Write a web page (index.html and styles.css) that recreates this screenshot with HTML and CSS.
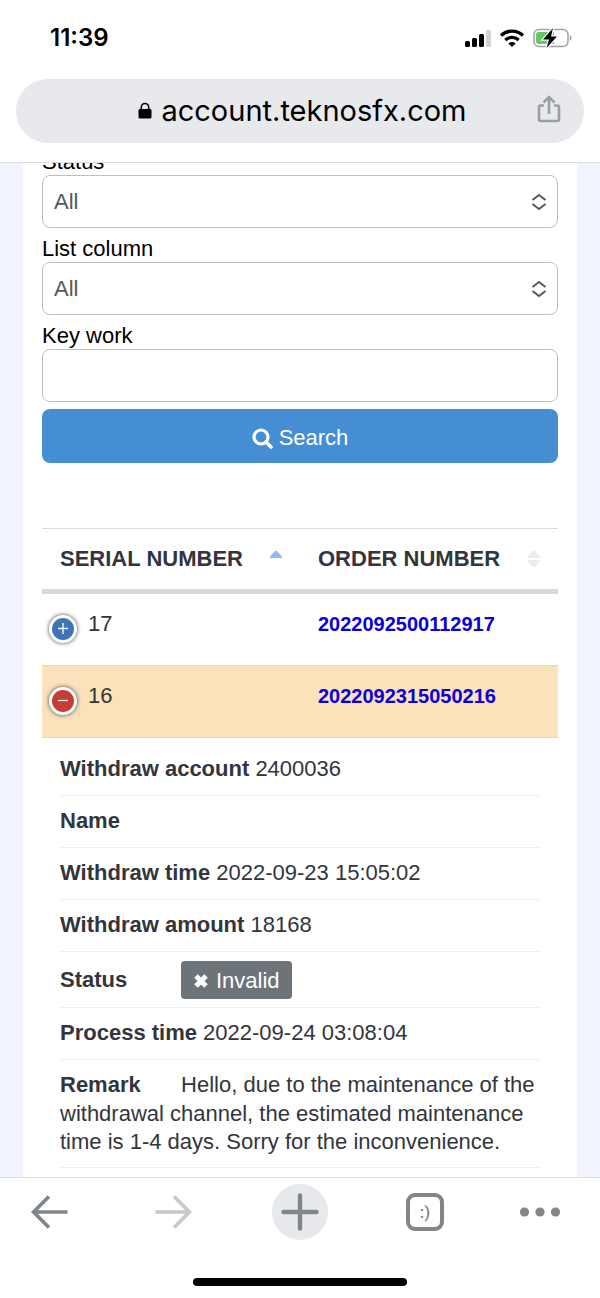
FILE: index.html
```html
<!DOCTYPE html>
<html lang="en">
<head>
    <meta charset="UTF-8">
    <meta name="viewport" content="width=device-width, initial-scale=1.0">
    <title>Withdraw history</title>
    <link rel="stylesheet" href="styles.css">
</head>
<body>

    <!-- Browser header -->
    <header class="top">
        <div class="status-bar">
            <span class="time">11:39</span>
            <div class="status-icons">
                <svg width="26" height="18" viewBox="0 0 26 18">
                    <rect x="0" y="12" width="5" height="6" rx="1.500"/>
                    <rect x="7" y="9" width="5" height="9" rx="1.500"/>
                    <rect x="14" y="5" width="5" height="13" rx="1.500"/>
                    <rect x="21" y="1" width="5" height="17" rx="1.500" fill="#d2d2d2"/>
                </svg>
                <svg width="26" height="18" viewBox="0 0 26 18">
                    <path d="M2 6.500a16 16 0 0 1 22 0" fill="none" stroke="#000" stroke-width="3.400"/>
                    <path d="M6.300 11a9.800 9.800 0 0 1 13.400 0" fill="none" stroke="#000" stroke-width="3.200"/>
                    <path d="M13 18l-3.600-3.600a5.200 5.200 0 0 1 7.200 0z"/>
                </svg>
                <svg width="39" height="20" viewBox="0 0 39 20">
                    <rect x="1" y="1.500" width="34" height="17" rx="5" fill="#fff" stroke="#a3a3a3" stroke-width="1.500"/>
                    <path d="M6 4h15v12H6a3 3 0 0 1-3-3V7a3 3 0 0 1 3-3z" fill="#63c866"/>
                    <path d="M36.800 7c2.400.8 2.400 5.200 0 6z" fill="#a3a3a3"/>
                    <path d="M20 0L10 11.500h6L13.500 20 24 8.500h-6z" stroke="#fff" stroke-width="2.400" paint-order="stroke"/>
                </svg>
            </div>
        </div>
        <div class="address">
            <svg class="lock" width="14" height="18" viewBox="0 0 14 18">
                <rect x="0.500" y="7" width="13" height="9.500" rx="1.500"/>
                <path d="M3.300 8V5.200a3.700 3.700 0 0 1 7.400 0V8" fill="none" stroke="#000" stroke-width="1.600"/>
            </svg>
            <span class="url">account.teknosfx.com</span>
            <button class="share" type="button" aria-label="Share">
                <svg width="24" height="30" viewBox="0 0 24 30" fill="none" stroke="#9b9ea2" stroke-width="2.600">
                    <path d="M7 11.500H3.500a1.500 1.500 0 0 0-1.500 1.500v12.500A1.500 1.500 0 0 0 3.500 27h17a1.500 1.500 0 0 0 1.500-1.500V13a1.500 1.500 0 0 0-1.500-1.500H17"/>
                    <path d="M12 20V3M6.500 8.500L12 3l5.500 5.500"/>
                </svg>
            </button>
        </div>
    </header>

    <!-- Page content -->
    <main class="page">
        <div class="card">
            <form class="filter">
                <label for="status">Status</label>
                <div class="select-box">
                    <select id="status">
                        <option>All</option>
                    </select>
                    <svg class="arrows" width="16" height="18" viewBox="0 0 16 18"><path d="M1.500 7L8 2l6.500 5M1.500 11L8 16l6.500-5"/></svg>
                </div>
                <label for="column">List column</label>
                <div class="select-box">
                    <select id="column">
                        <option>All</option>
                    </select>
                    <svg class="arrows" width="16" height="18" viewBox="0 0 16 18"><path d="M1.500 7L8 2l6.500 5M1.500 11L8 16l6.500-5"/></svg>
                </div>
                <label for="keyword">Key work</label>
                <input id="keyword" type="text">
                <button class="search" type="button">
                    <svg width="21" height="21" viewBox="0 0 21 21" fill="none" stroke="#fff">
                        <circle cx="9" cy="9" r="7" stroke-width="3.200"/>
                        <path d="M14 14l5 5" stroke-width="3.600" stroke-linecap="round"/>
                    </svg>
                    Search
                </button>
            </form>

            <table class="orders">
                <thead>
                    <tr>
                        <th>
                            <div class="head">
                                SERIAL NUMBER
                                <svg width="12" height="16" viewBox="0 0 12 16"><path d="M0 7V5.500L5 0h2l5 5.500V7z" fill="#8fb8f6"/></svg>
                            </div>
                        </th>
                        <th>
                            <div class="head">
                                ORDER NUMBER
                                <svg width="12" height="16" viewBox="0 0 12 16"><path d="M0 7V5.500L5 0h2l5 5.500V7zM0 9v1.500L5 16h2l5-5.500V9z" fill="#ececec"/></svg>
                            </div>
                        </th>
                    </tr>
                </thead>
                <tbody>
                    <tr>
                        <td>
                            <div class="serial">
                                <button class="toggle" type="button" aria-label="Expand">
                                    <svg width="12" height="12" viewBox="0 0 12 12"><path d="M6 0v11M1 5.500h10"/></svg>
                                </button>
                                17
                            </div>
                        </td>
                        <td><a href="#">2022092500112917</a></td>
                    </tr>
                    <tr class="open">
                        <td>
                            <div class="serial">
                                <button class="toggle minus" type="button" aria-label="Collapse">
                                    <svg width="12" height="12" viewBox="0 0 12 12"><path d="M1 5.500h10"/></svg>
                                </button>
                                16
                            </div>
                        </td>
                        <td><a href="#">2022092315050216</a></td>
                    </tr>
                    <tr class="child">
                        <td colspan="2">
                            <ul class="details">
                                <li><span class="title">Withdraw account</span> 2400036</li>
                                <li><span class="title">Name</span></li>
                                <li><span class="title">Withdraw time</span> 2022-09-23 15:05:02</li>
                                <li><span class="title">Withdraw amount</span> 18168</li>
                                <li class="state">
                                    <span class="title">Status</span>
                                    <span class="badge">
                                        <svg width="16" height="16" viewBox="0 0 16 16"><path d="M3 3l10 10M13 3L3 13" stroke="#fff" stroke-width="5"/></svg>
                                        Invalid
                                    </span>
                                </li>
                                <li><span class="title">Process time</span> 2022-09-24 03:08:04</li>
                                <li><span class="title">Remark</span> Hello, due to the maintenance of the withdrawal channel, the estimated maintenance time is 1-4 days. Sorry for the inconvenience.</li>
                            </ul>
                        </td>
                    </tr>
                </tbody>
            </table>
        </div>
    </main>

    <!-- Browser toolbar -->
    <footer class="bottom">
        <nav class="toolbar">
            <button type="button" aria-label="Back">
                <svg width="38" height="34" viewBox="0 0 38 34" fill="none" stroke="#80868a" stroke-width="3.600"><path d="M37.500 17H4M19 1.500L3.500 17 19 32.500"/></svg>
            </button>
            <button type="button" aria-label="Forward">
                <svg width="38" height="34" viewBox="0 0 38 34" fill="none" stroke="#c8c8c8" stroke-width="3.600"><path d="M.5 17H34M19 1.500L34.500 17 19 32.500"/></svg>
            </button>
            <button class="plus" type="button" aria-label="New tab">
                <svg width="38" height="38" viewBox="0 0 38 38" stroke="#80868a" stroke-width="4.400" stroke-linecap="round"><path d="M19 2.500v33M2.500 19h33"/></svg>
            </button>
            <button class="tabs" type="button">:)</button>
            <button type="button" aria-label="More">
                <svg width="42" height="10" viewBox="0 0 42 10" fill="#80868a"><circle cx="5.500" cy="5" r="4.600"/><circle cx="21" cy="5" r="4.600"/><circle cx="36.500" cy="5" r="4.600"/></svg>
            </button>
        </nav>
        <div class="home-bar"></div>
    </footer>

</body>
</html>
```
FILE: styles.css
```css
* {
    box-sizing: border-box;
}

body {
    font-family: "Liberation Sans", Arial, sans-serif;
    font-size: 22px;
    line-height: 28px;
    margin: 0;
    height: 100vh;
    display: flex;
    flex-direction: column;
    background-color: #fff;
    color: #000;
}

svg {
    display: block;
    flex: none;
}

button {
    font: inherit;
    border: none;
    background: none;
    padding: 0;
    cursor: pointer;
}

/* Browser header */
.top {
    flex: none;
    padding: 0 16px 19px;
    border-bottom: 1px solid #dcdde3;
}

.status-bar {
    display: flex;
    justify-content: space-between;
    align-items: center;
    height: 79px;
    padding: 0 12px 3px 34px;
}

.time {
    font-family: Inter, sans-serif;
    font-size: 24px;
    font-weight: 600;
}

.status-icons {
    display: flex;
    align-items: center;
    gap: 8px;
}

.address {
    position: relative;
    display: flex;
    justify-content: center;
    align-items: center;
    gap: 9px;
    height: 64px;
    padding-left: 5px;
    border-radius: 32px;
    background-color: #e8e9ec;
}

.url {
    font-family: Inter, sans-serif;
    font-size: 29px;
    line-height: 36px;
}

.share {
    position: absolute;
    right: 23px;
    top: 15px;
}

/* Page content */
.page {
    flex: 1;
    min-height: 0;
    overflow: hidden;
    padding: 0 23px;
    background-color: #f1f4ff;
}

.card {
    min-height: 100%;
    margin-top: -22px; /* scrolled under the header */
    padding: 0 19px 40px;
    background-color: #fff;
}

.filter label {
    display: block;
    padding-top: 7px;
    line-height: 27px;
}

.select-box {
    position: relative;
}

.filter select,
.filter input {
    display: block;
    width: 100%;
    height: 53px;
    padding: 0 11px;
    border: 1px solid #bfbfbf;
    border-radius: 8px;
    background-color: #fff;
    color: #55595c;
    font: inherit;
    appearance: none;
}

.arrows {
    position: absolute;
    right: 11px;
    top: 18px;
    fill: none;
    stroke: #55585c;
    stroke-width: 2;
    pointer-events: none;
}

.search {
    display: flex;
    justify-content: center;
    align-items: center;
    gap: 6px;
    width: 100%;
    height: 54px;
    margin-top: 7px;
    padding-top: 4px;
    border-radius: 8px;
    background-color: #468ed3;
    color: #fff;
}

/* Table */
.orders {
    width: 100%;
    margin-top: 65px;
    table-layout: fixed;
    border-collapse: separate;
    border-spacing: 0;
    color: #33353d;
}

.orders th {
    padding: 16px 18px;
    border-top: 1px solid #d9d9d9;
    border-bottom: 5px solid #d9d9d9;
    text-align: left;
}

.head {
    display: flex;
    justify-content: space-between;
    align-items: center;
    white-space: nowrap;
}

.orders td {
    padding: 16px 18px 27px;
    vertical-align: top;
}

.orders td:first-child {
    padding-left: 7px;
}

.orders a {
    color: #0b00dc;
    font-size: 20px;
    font-weight: bold;
    text-decoration: none;
}

.orders .open td,
.orders .child td {
    border-top: 1px solid #d9dad5;
}

.orders .open td {
    background-color: #fae2bb;
}

.orders .child td {
    padding: 6px 18px;
}

.serial {
    display: flex;
    align-items: flex-start;
    gap: 11px;
}

.toggle {
    display: flex;
    justify-content: center;
    align-items: center;
    width: 28px;
    height: 28px;
    margin: 5px 0 -5px;
    border: 3px solid #fff;
    border-radius: 50%;
    background-color: #3f75b5;
    box-shadow: 0 0 4px #444;
}

.toggle.minus {
    background-color: #c63d36;
}

.toggle path {
    stroke: #fff;
    stroke-width: 1.3;
}

/* Row details */
.details {
    list-style: none;
    margin: 0;
    padding: 0;
}

.details li {
    padding: 10px 0 11px;
    border-bottom: 1px solid #efefef;
}

.title {
    display: inline-block;
    min-width: 115px;
    line-height: 30px;
    font-weight: bold;
}

.details .state {
    display: flex;
    align-items: center;
    gap: 6px;
    padding: 9px 0 8px;
}

.badge {
    display: flex;
    align-items: center;
    gap: 7px;
    height: 38px;
    padding: 2px 12px 0;
    border-radius: 4px;
    background-color: #6c747a;
    color: #fff;
}

/* Browser toolbar */
.bottom {
    flex: none;
    padding: 6px 0 12px;
    border-top: 1px solid #dcdde3;
    background-color: #fff;
}

.toolbar {
    display: grid;
    grid-template-columns: 98fr 152fr 100fr 150fr 80fr;
    justify-items: center;
    align-items: center;
    height: 56px;
    padding-right: 20px;
}

.plus {
    display: flex;
    justify-content: center;
    align-items: center;
    width: 56px;
    height: 56px;
    border-radius: 50%;
    background-color: #e8e9ec;
}

.tabs {
    width: 38px;
    height: 38px;
    border: 4px solid #80868a;
    border-radius: 9px;
    color: #80868a;
    font-family: Roboto, sans-serif;
    font-size: 17px;
    font-weight: 500;
}

.home-bar {
    width: 214px;
    height: 8px;
    margin: 38px auto 0;
    border-radius: 4px;
    background-color: #000;
}
```
